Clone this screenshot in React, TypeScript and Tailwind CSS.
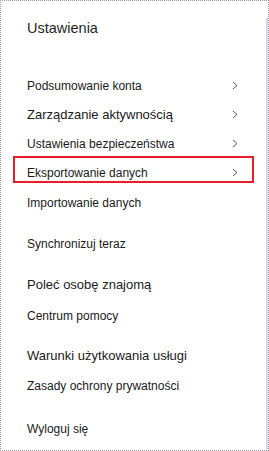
const items = [
  { label: 'Podsumowanie konta', size: 'text-[12px]', mt: 'mt-[31px]', chevron: true },
  { label: 'Zarządzanie aktywnością', size: 'text-[13px]', mt: 'mt-[2px]', chevron: true },
  { label: 'Ustawienia bezpieczeństwa', size: 'text-[12px]', mt: 'mt-[2px]', chevron: true },
  { label: 'Eksportowanie danych', size: 'text-[12px]', mt: 'mt-[2px]', chevron: true, active: true },
  { label: 'Importowanie danych', size: 'text-[12px]', mt: 'mt-[3px]' },
  { label: 'Synchronizuj teraz', size: 'text-[12px]', mt: 'mt-[14px]' },
  { label: 'Poleć osobę znajomą', size: 'text-[13px]', mt: 'mt-[14px]' },
  { label: 'Centrum pomocy', size: 'text-[12px]', mt: 'mt-[4px]' },
  { label: 'Warunki użytkowania usługi', size: 'text-[13px]', mt: 'mt-[13px]' },
  { label: 'Zasady ochrony prywatności', size: 'text-[12px]', mt: 'mt-[3px]' },
  { label: 'Wyloguj się', size: 'text-[12px]', mt: 'mt-[16px]' },
];

const Chevron = () => (
  <svg width="6" height="9" viewBox="0 0 6 9">
    <path d="M1 1 L5 4.5 L1 8" fill="none" stroke="#555" strokeWidth="1" />
  </svg>
);

const App = () => {
  return (
    <div
      className="w-[269px] h-[451px] bg-white border border-dotted border-[#9a9a9a] overflow-hidden"
      style={{ fontFamily: '"Liberation Sans", Arial, sans-serif' }}
    >
      <div className="h-full border-r-2 border-[#d4d4f4] pl-[12px]">
        <h1 className="mt-[17px] h-[20px] pl-[14px] text-[14.5px] leading-[20px] text-[#1f1f1f] font-normal">
          Ustawienia
        </h1>
        <div className="flex flex-col">
          {items.map((item) => (
            <div
              key={item.label}
              className={`${item.mt} w-[241px] h-[27px] flex items-center justify-between pt-[6px] pl-[12px] pr-[14px] border-2 ${
                item.active ? 'border-[#ea1d2c]' : 'border-transparent'
              }`}
            >
              <span className={`${item.size} text-[#1a1a1a] leading-none`}>{item.label}</span>
              {item.chevron && <Chevron />}
            </div>
          ))}
        </div>
      </div>
    </div>
  );
};

export default App;
